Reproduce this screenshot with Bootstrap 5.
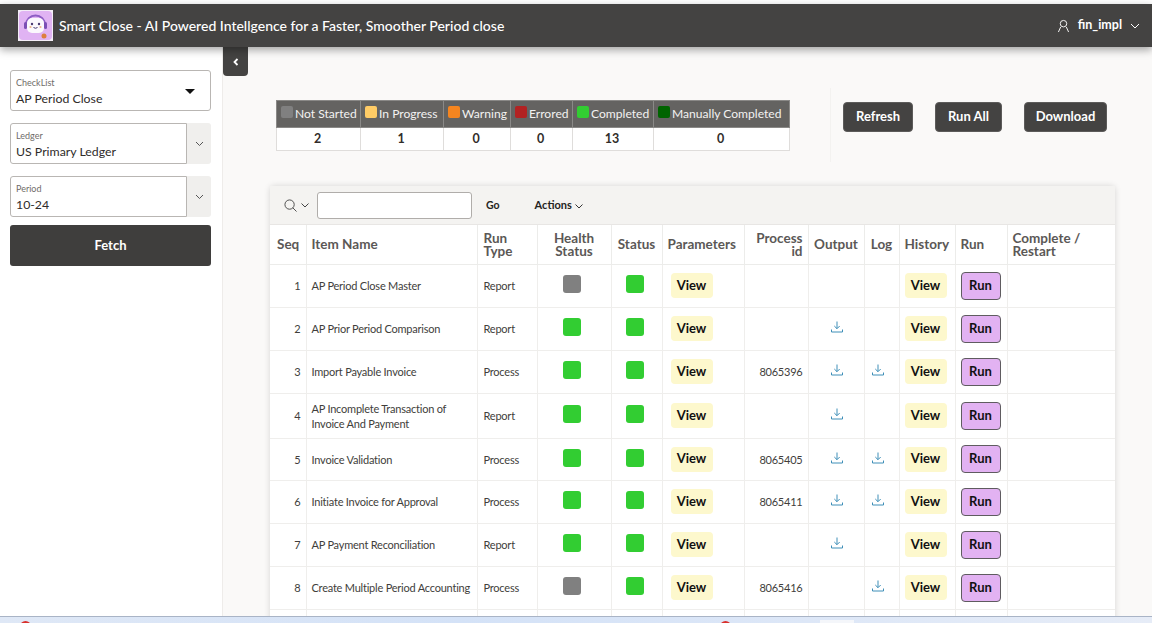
<!DOCTYPE html>
<html lang="en"><head><meta charset="utf-8"><title>Smart Close</title>
<link href="https://cdn.jsdelivr.net/npm/bootstrap@5.3.0/dist/css/bootstrap.min.css" rel="stylesheet">
<style>
html,body{height:623px;overflow:hidden}
body{background:#faf9f8;font-family:Lato,"Noto Sans",sans-serif;color:#312d2a;font-size:12px}
.page-shell{height:623px;overflow:hidden;display:flex;flex-direction:column}
.top-gap{height:4px;background:#fff;flex:none}
.app-header{height:43px;flex:none;background:#444342;color:#fff;box-shadow:0 3px 8px rgba(0,0,0,.35);padding:0 12px 0 18px;position:relative;z-index:3}
.app-logo{width:35px;height:31px;display:block}
.app-title{font-size:14px;font-weight:500;margin-left:6px}
.app-user{font-size:12.5px;font-weight:700}
.body-row{flex:1;min-height:0;position:relative}
.side-col{width:223px;flex:none;background:#fff;border-right:1px solid #eeecea;padding:23px 11px 0 10px}
.float-field{border:1px solid #b9b6b3;border-radius:3px;background:#fff;height:41px;padding:6px 5px 0;position:relative;flex:1;min-width:0}
.float-label{display:block;font-size:9px;line-height:12px;color:#6f6c69}
.float-value{display:block;font-size:12.3px;line-height:18px;margin-top:1px;color:#2f2c2a}
.field-line{margin-bottom:12px}
.field-line .float-field{border-radius:3px 0 0 3px}
.field-line .float-field.w-100{border-radius:3px}
.field-cap{width:24px;flex:none;background:#f0efed;border-radius:0 3px 3px 0}
.caret-tri{position:absolute;right:15px;top:18px;width:0;height:0;border-left:5px solid transparent;border-right:5px solid transparent;border-top:5px solid #111}
.fetch-btn{background:#3f3e3d;color:#fff;border:0;border-radius:3px;height:41px;width:100%;font-weight:700;font-size:13px;margin-top:-4px}
.collapse-tab{position:absolute;left:223px;top:0;width:25px;height:29px;background:#444342;border-radius:0 0 4px 4px;z-index:2}
.main-col{flex:1;min-width:0;padding:53px 37px 0 47px}
.summary-row{height:50px;margin:0 0 36px 6px}
.legend-tbl{width:514px;height:50px;flex:none;border-collapse:collapse;background:#fff;table-layout:fixed}
.legend-tbl th{background:#646361;color:#f3f2f1;font-weight:400;font-size:12.1px;height:27px;padding:0 0 0 4px;border:1px solid #8a8987;white-space:nowrap}
.legend-tbl td{height:23px;text-align:center;font-weight:700;font-size:12.5px;border:1px solid #dfdddb;padding:0 2px 0 0}
.leg-sq{display:inline-block;width:11.500px;height:11.500px;border-radius:2px;vertical-align:0;margin-right:2.500px}
.action-col{margin-left:40px;margin-top:-12px;border-left:1px solid #f3f2f0;height:74px;padding:14px 0 0 12px;gap:22px;display:flex}
.dark-btn{background:#444342;color:#fff;border:1px solid #5c5b5a;border-radius:4px;height:30px;font-weight:700;font-size:13px;padding:0}
.report-card{background:#fff;border-radius:4px 4px 0 0;box-shadow:0 0 6px rgba(0,0,0,.15);height:500px}
.report-bar{height:39px;background:#f4f3f1;border-bottom:1px solid #e8e6e4;padding-left:14px}
.search-box{width:155px;height:27px;border:1px solid #b0adaa;border-radius:3px;background:#fff;margin-left:8px}
.bar-go{font-weight:700;font-size:10.5px;margin-left:14px;padding-top:2px;color:#252321}
.bar-act{font-weight:700;font-size:11px;margin-left:35px;padding-top:1px;color:#252321}
.grid-tbl{border-collapse:collapse;table-layout:fixed;width:845px;font-size:11px;letter-spacing:-.22px;margin:0}
.grid-tbl th{height:39px;font-size:13.5px;letter-spacing:0;line-height:13px;font-weight:700;color:#5b5856;padding:1px 5px 0;vertical-align:middle;border:1px solid #ececea;border-top:0}
.grid-tbl td{padding:0 5px;vertical-align:middle;border:1px solid #efeeec;color:#413e3b;line-height:15px}
.grid-tbl tr > :first-child{border-left:0}
.grid-tbl tr > :last-child{border-right:0}
.grid-tbl tr > th:first-child{padding-left:7px;padding-right:0}
.grid-tbl tr > :nth-child(3){padding-left:6px}
.r-cell{text-align:right}
.c-cell{text-align:center}
.stat-sq{display:block;width:18px;height:18px;border-radius:3px;margin-bottom:3px}
.stat-one{margin-left:20px}
.stat-two{margin-left:9px}
.bg-none-yet{background:#808080}
.bg-prog{background:#ffcc66}
.bg-warn{background:#f5851f}
.bg-err{background:#b22222}
.bg-done{background:#32cd32}
.bg-manual{background:#006400}
.view-chip{background:#fdf8cd;color:#111;border:0;border-radius:4px;width:42px;height:25px;font-weight:700;font-size:13px;padding:0;display:block;margin-left:3px}
.grid-tbl td .hist-chip{margin-left:0}
.run-chip{background:#e2b2f2;color:#111;border:1.5px solid #5f5c60;border-radius:4px;width:40px;height:28px;font-weight:700;font-size:13px;padding:0;display:block}
.dl-ico{display:block;margin:0 auto 3px}
.out-cell svg{margin-left:17px}
.log-cell svg{margin-left:2px}
.task-strip{height:7px;flex:none;background:linear-gradient(90deg,#dfe8f6,#d4e2f7 40%,#e6ecf7);border-top:1px solid #a9b4c6;position:relative;z-index:4}
.strip-dot{position:absolute;top:4px;width:11px;height:11px;border-radius:50%;background:#d9302c}
.strip-tile{position:absolute;top:3px;left:820px;width:34px;height:6px;background:#f4f6fa}
</style></head>
<body>
<div class="page-shell">
<div class="top-gap"></div>
<header class="app-header d-flex align-items-center">
<svg class="app-logo" viewBox="0 0 35 31"><rect width="35" height="31" fill="#f4eef7"/><rect x="1" y="1" width="33" height="29" rx="4" fill="#e0b3f3"/><path d="M8 15a9.500 9.500 0 0 1 19 0" fill="none" stroke="#8d5cc4" stroke-width="2"/><rect x="9" y="8" width="17" height="15" rx="5" fill="#fbf8fd"/><rect x="6" y="12" width="3" height="7" rx="1.500" fill="#7c4fb5"/><rect x="26" y="12" width="3" height="7" rx="1.500" fill="#7c4fb5"/><circle cx="14" cy="14" r="1.200" fill="#4a3a70"/><circle cx="21" cy="14" r="1.200" fill="#4a3a70"/><circle cx="12.500" cy="17" r="1.100" fill="#f2b48a"/><circle cx="22.500" cy="17" r="1.100" fill="#f2b48a"/><path d="M15.500 17.500q2 1.500 4 0" stroke="#4a3a70" fill="none"/><circle cx="26" cy="26" r="2.500" fill="#dd7f3f"/></svg>
<span class="app-title">Smart Close - AI Powered Intellgence for a Faster, Smoother Period close</span>
<span class="app-user ms-auto d-flex align-items-center">
<svg width="13" height="14" viewBox="0 0 14 14" fill="none" stroke="#fff" class="me-2"><circle cx="7" cy="4.500" r="3.500"/><path d="M1.500 13.500 4 8M12.500 13.500 10 8"/></svg>fin_impl
<svg width="10" height="6" viewBox="0 0 10 6" fill="none" stroke="#fff" class="ms-2"><path d="M1 1l4 4 4-4"/></svg></span>
</header>
<div class="body-row d-flex">
<aside class="side-col">
<div class="d-flex field-line"><div class="float-field w-100"><span class="float-label">CheckList</span><span class="float-value">AP Period Close</span><span class="caret-tri"></span></div></div>
<div class="d-flex field-line"><div class="float-field"><span class="float-label">Ledger</span><span class="float-value">US Primary Ledger</span></div><div class="field-cap d-flex align-items-center justify-content-center"><svg width="9" height="6" viewBox="0 0 9 6" fill="none" stroke="#555"><path d="M1 1l3.500 3.500L8 1"/></svg></div></div>
<div class="d-flex field-line"><div class="float-field"><span class="float-label">Period</span><span class="float-value">10-24</span></div><div class="field-cap d-flex align-items-center justify-content-center"><svg width="9" height="6" viewBox="0 0 9 6" fill="none" stroke="#555"><path d="M1 1l3.500 3.500L8 1"/></svg></div></div>
<button class="btn fetch-btn">Fetch</button>
</aside>
<div class="collapse-tab d-flex align-items-center justify-content-center"><svg width="6" height="8" viewBox="0 0 6 8" fill="none" stroke="#fff" stroke-width="1.800"><path d="M4.500 1 1.500 4l3 3"/></svg></div>
<main class="main-col">
<div class="summary-row d-flex">
<table class="legend-tbl">
<colgroup><col style="width:84px"><col style="width:83px"><col style="width:67px"><col style="width:62px"><col style="width:81px"><col></colgroup>
<tr><th><i class="leg-sq bg-none-yet"></i>Not Started</th><th><i class="leg-sq bg-prog"></i>In Progress</th><th><i class="leg-sq bg-warn"></i>Warning</th><th><i class="leg-sq bg-err"></i>Errored</th><th><i class="leg-sq bg-done"></i>Completed</th><th><i class="leg-sq bg-manual"></i>Manually Completed</th></tr>
<tr><td>2</td><td>1</td><td>0</td><td>0</td><td>13</td><td>0</td></tr>
</table>
<div class="action-col">
<button class="btn dark-btn" style="width:70px">Refresh</button>
<button class="btn dark-btn" style="width:67px">Run All</button>
<button class="btn dark-btn" style="width:83px">Download</button>
</div>
</div>
<section class="report-card">
<div class="report-bar d-flex align-items-center">
<svg width="13" height="13" viewBox="0 0 14 14" fill="none" stroke="#444"><circle cx="6" cy="6" r="5"/><path d="M9.500 9.500 13.500 13.500"/></svg>
<svg width="8" height="5" viewBox="0 0 8 5" fill="none" stroke="#444" class="ms-1"><path d="M.5.500 4 4 7.500.500"/></svg>
<div class="search-box"></div>
<span class="bar-go">Go</span>
<span class="bar-act">Actions <svg width="8" height="5" viewBox="0 0 8 5" fill="none" stroke="#333"><path d="M.5.500 4 4 7.500.500"/></svg></span>
</div>
<table class="grid-tbl">
<colgroup><col style="width:36px"><col style="width:171px"><col style="width:60px"><col style="width:74px"><col style="width:51px"><col style="width:82px"><col style="width:64px"><col style="width:56px"><col style="width:35px"><col style="width:56px"><col style="width:52px"><col></colgroup>
<thead><tr><th>Seq</th><th>Item Name</th><th>Run<br>Type</th><th class="c-cell">Health<br>Status</th><th class="c-cell">Status</th><th>Parameters</th><th class="r-cell">Process<br>id</th><th class="c-cell">Output</th><th class="c-cell">Log</th><th>History</th><th>Run</th><th>Complete /<br>Restart</th></tr></thead>
<tbody id="rows"></tbody>
</table>
</section>
</main>
</div>
<div class="task-strip"><span class="strip-dot" style="left:20px"></span><span class="strip-dot" style="left:720px"></span><span class="strip-tile"></span></div>
</div>
<script>
const dl='<svg class="dl-ico" width="12" height="12" viewBox="0 0 12 12" fill="none" stroke="#3f8fb8"><path d="M6 .5v7M3.300 5 6 7.700 8.700 5M.5 8.500v2.500h11V8.500"/></svg>';
const data=[[1,'AP Period Close Master','Report','bg-none-yet','',0,0,43],[2,'AP Prior Period Comparison','Report','bg-done','',1,0,43],[3,'Import Payable Invoice','Process','bg-done','8065396',1,1,43],[4,'AP Incomplete Transaction of Invoice And Payment','Report','bg-done','',1,0,45],[5,'Invoice Validation','Process','bg-done','8065405',1,1,42],[6,'Initiate Invoice for Approval','Process','bg-done','8065411',1,1,43],[7,'AP Payment Reconciliation','Report','bg-done','',1,0,43],[8,'Create Multiple Period Accounting','Process','bg-none-yet','8065416',0,1,43],[9,'','','','',0,0,20]];
document.getElementById('rows').innerHTML=data.map(d=>{
if(!d[1])return '<tr style="height:20px">'+'<td></td>'.repeat(12)+'</tr>';
return `<tr style="height:${d[7]}px"><td class="r-cell">${d[0]}</td><td>${d[1]}</td><td>${d[2]}</td><td><i class="stat-sq stat-one ${d[3]}"></i></td><td><i class="stat-sq stat-two bg-done"></i></td><td><button class="btn view-chip">View</button></td><td class="r-cell">${d[4]}</td><td class="out-cell">${d[5]?dl:''}</td><td class="log-cell">${d[6]?dl:''}</td><td><button class="btn view-chip hist-chip">View</button></td><td><button class="btn run-chip">Run</button></td><td></td></tr>`}).join('');
</script>
<script src="https://cdn.jsdelivr.net/npm/bootstrap@5.3.0/dist/js/bootstrap.bundle.min.js"></script>
</body></html>
